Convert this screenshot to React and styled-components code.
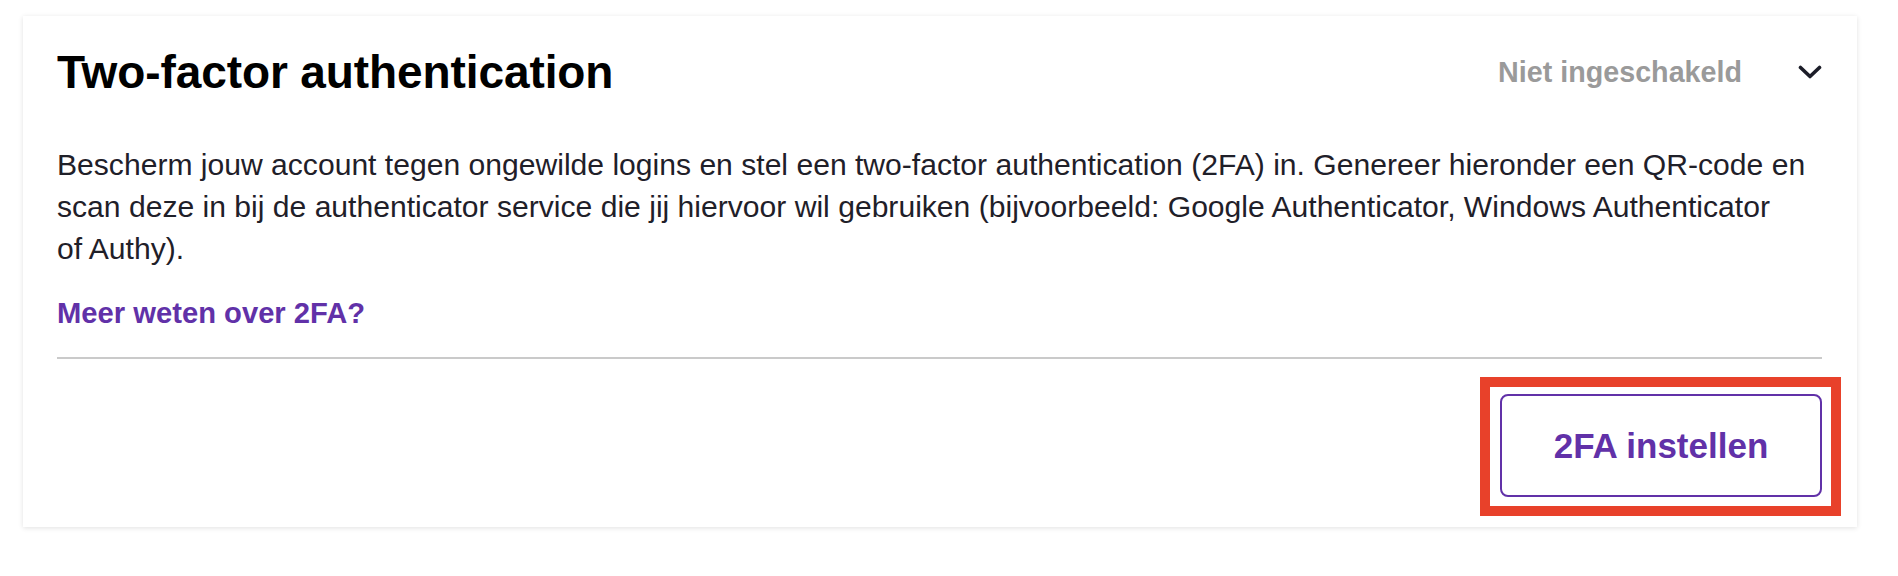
import styled, { createGlobalStyle } from "styled-components";

const GlobalStyle = createGlobalStyle`
  body {
    margin: 0;
    background: #ffffff;
    font-family: "Liberation Sans", Arial, sans-serif;
  }
`;

const Page = styled.div`
  padding: 16px 41px 48px 23px;
`;

const Card = styled.section`
  background: #ffffff;
  box-shadow: 0 1px 5px rgba(0, 0, 0, 0.12);
  padding: 0 35px 30px 34px;
`;

const Header = styled.div`
  display: flex;
  align-items: center;
  height: 112px;
`;

const Title = styled.h2`
  flex: 1;
  margin: 0;
  font-size: 46px;
  line-height: 54px;
  font-weight: 700;
  letter-spacing: -0.1px;
  color: #000000;
`;

const Status = styled.span`
  font-size: 28.7px;
  font-weight: 700;
  color: #9a9a9a;
  margin-right: 56px;
`;

const Chevron = styled.svg`
  width: 24px;
  height: 14px;
  display: block;
`;

const Description = styled.p`
  margin: 16px 0 0;
  font-size: 30.1px;
  line-height: 42px;
  color: #1f2029;
`;

const MoreLink = styled.a`
  display: inline-block;
  margin-top: 22px;
  font-size: 29.2px;
  line-height: 42px;
  font-weight: 700;
  color: #6131a8;
  text-decoration: none;
`;

const Divider = styled.hr`
  margin: 23px 0 0;
  border: 0;
  height: 2px;
  background: #cacaca;
`;

const Footer = styled.div`
  display: flex;
  justify-content: flex-end;
  padding-top: 35px;
`;

// red annotation frame drawn over the button
const Highlight = styled.div`
  position: relative;

  &::after {
    content: "";
    position: absolute;
    top: -17px;
    right: -19px;
    bottom: -19px;
    left: -20px;
    border: 10px solid #e8412a;
    pointer-events: none;
  }
`;

const SetupButton = styled.button`
  display: block;
  width: 322px;
  height: 103px;
  border: 2px solid #6131a8;
  border-radius: 8px;
  background: #ffffff;
  color: #6131a8;
  font-family: "Liberation Sans", Arial, sans-serif;
  font-size: 35px;
  font-weight: 700;
  cursor: pointer;
`;

const App = () => {
  return (
    <>
      <GlobalStyle />
      <Page>
        <Card>
          <Header>
            <Title>Two-factor authentication</Title>
            <Status>Niet ingeschakeld</Status>
            <Chevron viewBox="0 0 24 14" fill="none">
              <path
                d="M2.5 2.5 L12 11.5 L21.5 2.5"
                stroke="#1c1d28"
                strokeWidth="3.6"
                strokeLinecap="round"
                strokeLinejoin="round"
              />
            </Chevron>
          </Header>
          <Description>
            Bescherm jouw account tegen ongewilde logins en stel een two-factor
            authentication (2FA) in. Genereer hieronder een QR-code en
            <br />
            scan deze in bij de authenticator service die jij hiervoor wil
            gebruiken (bijvoorbeeld: Google Authenticator, Windows Authenticator
            <br />
            of Authy).
          </Description>
          <MoreLink href="#">Meer weten over 2FA?</MoreLink>
          <Divider />
          <Footer>
            <Highlight>
              <SetupButton>2FA instellen</SetupButton>
            </Highlight>
          </Footer>
        </Card>
      </Page>
    </>
  );
};

export default App;
